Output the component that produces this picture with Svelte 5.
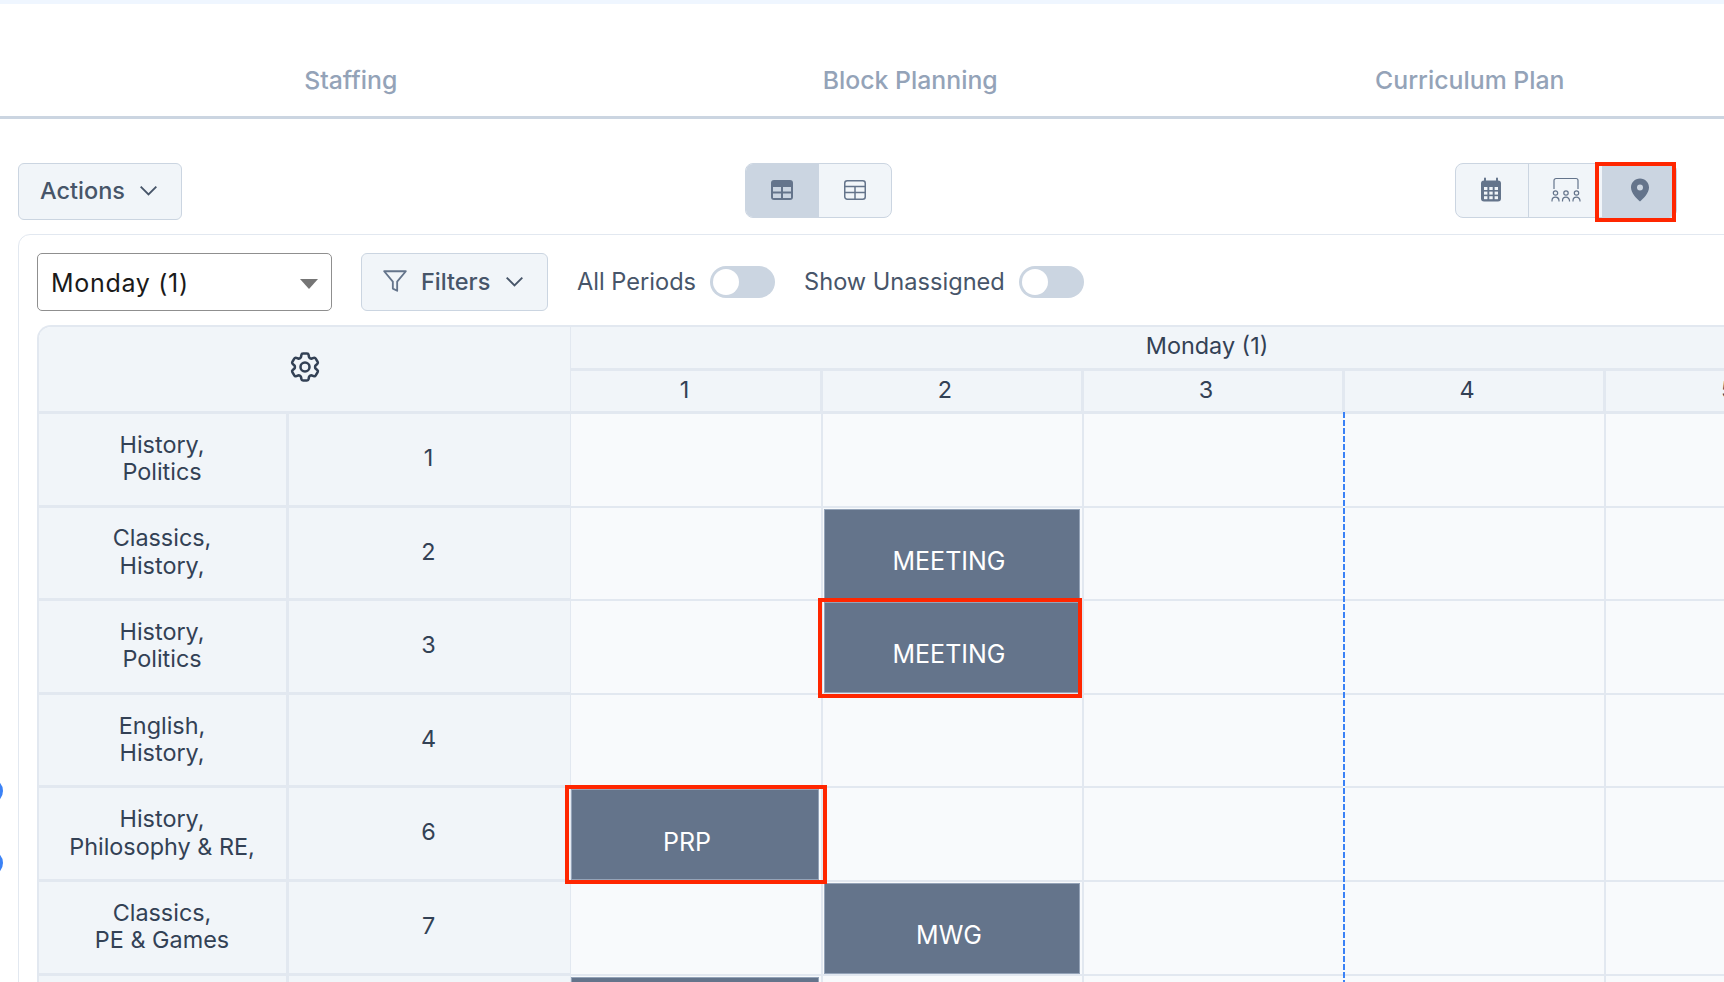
<script>
  const tabs = ["Staffing", "Block Planning", "Curriculum Plan"];
  const periods = [1, 2, 3, 4, 5];

  const rows = [
    { lines: ["History,", "Politics"], num: "1", blocks: {} },
    { lines: ["Classics,", "History,"], num: "2", blocks: { 2: "MEETING" } },
    { lines: ["History,", "Politics"], num: "3", blocks: { 2: "MEETING" } },
    { lines: ["English,", "History,"], num: "4", blocks: {} },
    { lines: ["History,", "Philosophy & RE,"], num: "6", blocks: { 1: "PRP" } },
    { lines: ["Classics,", "PE & Games"], num: "7", blocks: { 2: "MWG" } },
    { lines: [], num: "", blocks: { 1: " " } },
  ];
</script>

<div class="page">
  <div class="strip"></div>

  <nav class="tabs">
    {#each tabs as tab}
      <div class="tab">{tab}</div>
    {/each}
  </nav>

  <div class="toolbar">
    <button class="btn actions">
      Actions
      <svg class="chev" viewBox="0 0 24 24"><path d="M19.500 8.250l-7.500 7.500-7.500-7.500" /></svg>
    </button>

    <div class="segment two">
      <div class="seg active">
        <svg width="24" height="24" viewBox="0 0 24 24">
          <rect x="1" y="2" width="22" height="20" rx="3" fill="#64748b" />
          <rect x="3" y="9" width="8" height="4.500" fill="#cbd5e1" />
          <rect x="13" y="9" width="8" height="4.500" fill="#cbd5e1" />
          <rect x="3" y="15.500" width="8" height="4.500" fill="#cbd5e1" />
          <rect x="13" y="15.500" width="8" height="4.500" fill="#cbd5e1" />
        </svg>
      </div>
      <div class="seg">
        <svg width="24" height="24" viewBox="0 0 24 24" fill="none" stroke="#64748b" stroke-width="1.500">
          <rect x="1.750" y="2.750" width="20.500" height="18.500" rx="2.500" />
          <path d="M2 8.500h20M2 14.500h20M12 8.500v12.500" />
        </svg>
      </div>
    </div>

    <div class="segment three">
      <div class="seg cal">
        <svg width="24" height="26" viewBox="0 0 24 26">
          <path d="M6 1.500v4M18 1.500v4" stroke="#64748b" stroke-width="2" stroke-linecap="round" />
          <rect x="2" y="3.500" width="20" height="21" rx="3" fill="#64748b" />
          <g fill="#f1f5f9">
            <rect x="5" y="10" width="3.400" height="3" />
            <rect x="10.300" y="10" width="3.400" height="3" />
            <rect x="15.600" y="10" width="3.400" height="3" />
            <rect x="5" y="14.600" width="3.400" height="3" />
            <rect x="10.300" y="14.600" width="3.400" height="3" />
            <rect x="15.600" y="14.600" width="3.400" height="3" />
            <rect x="5" y="19.200" width="3.400" height="3" />
            <rect x="10.300" y="19.200" width="3.400" height="3" />
            <rect x="15.600" y="19.200" width="3.400" height="3" />
          </g>
        </svg>
      </div>
      <div class="seg room">
        <svg width="30" height="26" viewBox="0 0 30 26" fill="none" stroke="#64748b" stroke-width="1.200">
          <path d="M3 12V3.500A2 2 0 0 1 5 1.500h20a2 2 0 0 1 2 2V12" />
          <circle cx="4.500" cy="16" r="2.200" />
          <circle cx="15" cy="16" r="2.200" />
          <circle cx="25.500" cy="16" r="2.200" />
          <path d="M1 24.500v-.800a3.500 3.500 0 0 1 7 0v.800M11.500 24.500v-.800a3.500 3.500 0 0 1 7 0v.800M22 24.500v-.800a3.500 3.500 0 0 1 7 0v.800" />
        </svg>
      </div>
      <div class="seg active">
        <svg width="20" height="24" viewBox="0 0 20 24">
          <path
            fill="#64748b"
            fill-rule="evenodd"
            d="M10 .500C4.800.500 1 4.500 1 9.500c0 5.500 5.500 11 9 14 3.500-3 9-8.500 9-14C19 4.500 15.200.500 10 .500zm0 12a3 3 0 1 1 0-6 3 3 0 0 1 0 6z"
          />
        </svg>
      </div>
    </div>
  </div>

  <section class="card">
    <div class="filters">
      <div class="select">
        <span>Monday (1)</span>
        <i class="caret"></i>
      </div>
      <button class="btn filter">
        <svg class="funnel" viewBox="0 0 24 24"><path d="M22 3H2l8 9.500V19l4 2v-8.500z" /></svg>
        Filters
        <svg class="chev" viewBox="0 0 24 24"><path d="M19.500 8.250l-7.500 7.500-7.500-7.500" /></svg>
      </button>
      <div class="switch-row">
        <span>All Periods</span>
        <i class="switch"></i>
      </div>
      <div class="switch-row">
        <span>Show Unassigned</span>
        <i class="switch"></i>
      </div>
    </div>

    <div class="table-wrap">
      <div class="table">
        <div class="corner">
          <svg class="gear" viewBox="0 0 24 24">
            <path d="M9.594 3.940c.090-.542.560-.940 1.110-.940h2.593c.550 0 1.020.398 1.110.940l.213 1.281c.063.374.313.686.645.870.074.040.147.083.220.127.324.196.720.257 1.075.124l1.217-.456a1.125 1.125 0 0 1 1.370.490l1.296 2.247a1.125 1.125 0 0 1-.260 1.431l-1.003.827c-.293.240-.438.613-.431.992a6.759 6.759 0 0 1 0 .255c-.007.378.138.750.430.990l1.005.828c.424.350.534.954.260 1.430l-1.298 2.247a1.125 1.125 0 0 1-1.369.491l-1.217-.456c-.355-.133-.750-.072-1.076.124a6.570 6.570 0 0 1-.220.128c-.331.183-.581.495-.644.869l-.213 1.280c-.090.543-.560.941-1.110.941h-2.594c-.550 0-1.020-.398-1.110-.940l-.213-1.281c-.062-.374-.312-.686-.644-.870a6.520 6.520 0 0 1-.220-.127c-.325-.196-.720-.257-1.076-.124l-1.217.456a1.125 1.125 0 0 1-1.369-.490l-1.297-2.247a1.125 1.125 0 0 1 .260-1.431l1.004-.827c.292-.240.437-.613.430-.992a6.932 6.932 0 0 1 0-.255c.007-.378-.138-.750-.430-.990l-1.004-.828a1.125 1.125 0 0 1-.260-1.430l1.297-2.247a1.125 1.125 0 0 1 1.370-.491l1.216.456c.356.133.751.072 1.076-.124.072-.044.146-.087.220-.128.332-.183.582-.495.644-.869l.214-1.281z" />
            <path d="M15 12a3 3 0 1 1-6 0 3 3 0 0 1 6 0z" />
          </svg>
        </div>
        <div class="day">Monday (1)</div>
        {#each periods as p}
          <div class="period" class:first={p === 1}>{p}</div>
        {/each}

        {#each rows as row}
          <div class="label">
            {#each row.lines as line}
              <div>{line}</div>
            {/each}
          </div>
          <div class="label num">{row.num}</div>
          {#each periods as p}
            <div class="cell">
              {#if row.blocks[p]}
                <div class="block" class:first={p === 1}>{row.blocks[p]}</div>
              {/if}
            </div>
          {/each}
        {/each}
      </div>
      <div class="now-line"></div>
    </div>
  </section>

  <!-- cut-off blue markers at the window edge -->
  <i class="dot dot-a"></i>
  <i class="dot dot-b"></i>

  <!-- red annotation boxes -->
  <i class="mark mark-pin"></i>
  <i class="mark mark-meeting"></i>
  <i class="mark mark-prp"></i>
</div>

<style>
  :global(body) {
    overflow: hidden;
    background: #fff;
  }

  .page {
    position: relative;
    width: 1724px;
    height: 982px;
    overflow: hidden;
    font-family: Inter, "Liberation Sans", sans-serif;
    color: #334155;
  }

  .strip {
    height: 4px;
    background: #eff6ff;
  }

  .tabs {
    display: flex;
    height: 115px;
    padding-left: 71px;
    border-bottom: 3px solid #cbd5e1;
    box-sizing: border-box;
  }

  .tab {
    flex: 0 0 559.500px;
    align-self: flex-end;
    padding-bottom: 21px;
    text-align: center;
    font-size: 24.800px;
    font-weight: 500;
    line-height: 30px;
    color: #94a3b8;
  }

  .toolbar {
    display: flex;
    justify-content: space-between;
    margin-top: 44px;
    padding: 0 47px 0 18px;
    height: 57px;
  }

  .btn {
    display: flex;
    align-items: center;
    box-sizing: border-box;
    border: 1px solid #cbd5e1;
    border-radius: 6px;
    background: #f1f5f9;
    color: #475569;
    font-family: inherit;
    font-size: 23.500px;
    font-weight: 500;
    padding: 0 0 2px;
  }

  .actions {
    width: 164px;
    height: 57px;
    padding-left: 21px;
    gap: 11px;
  }

  .chev {
    width: 25px;
    height: 25px;
    fill: none;
    stroke: #475569;
    stroke-width: 1.800;
  }

  .segment {
    display: flex;
    height: 55px;
    box-sizing: border-box;
    border: 1px solid #cbd5e1;
    border-radius: 8px;
    background: #f1f5f9;
    overflow: hidden;
  }

  .seg {
    display: flex;
    align-items: center;
    justify-content: center;
    padding-bottom: 2px;
  }

  .seg.active {
    background: #cbd5e1;
  }

  .two {
    width: 147px;
  }

  .two .seg {
    width: 73px;
  }

  .three {
    width: 222px;
  }

  .three .seg {
    width: 73px;
    border-right: 1px solid #cbd5e1;
  }

  .three .cal {
    padding-right: 2px;
    box-sizing: border-box;
  }

  .three .seg:last-child {
    border-right: 0;
    flex: 1;
  }

  .card {
    width: max-content;
    margin: 14px 0 0 18px;
    padding: 18px 0 0 18px;
    border: 1px solid #e2e8f0;
    border-radius: 12px 0 0 0;
  }

  .filters {
    display: flex;
    align-items: center;
    gap: 29px;
    height: 58px;
  }

  .select {
    display: flex;
    align-items: center;
    justify-content: space-between;
    box-sizing: border-box;
    width: 295px;
    height: 58px;
    padding: 1px 13px 0 13px;
    border: 1px solid #8f8f8f;
    border-radius: 5px;
    background: #fff;
    color: #1a1a1a;
    font-size: 25px;
    letter-spacing: 0.700px;
  }

  .caret {
    width: 0;
    height: 0;
    border-left: 9px solid transparent;
    border-right: 9px solid transparent;
    border-top: 10px solid #757575;
    margin-top: 2px;
  }

  .filter {
    width: 187px;
    height: 58px;
    padding-left: 20px;
  }

  .funnel {
    width: 26px;
    height: 26px;
    margin-right: 13px;
    fill: none;
    stroke: #64748b;
    stroke-width: 1.700;
    stroke-linejoin: round;
  }

  .filter .chev {
    margin-left: 12px;
  }

  .switch-row {
    display: flex;
    align-items: center;
    gap: 14px;
    font-size: 23.600px;
    color: #475569;
  }

  .switch-row span {
    margin-top: -2px;
  }

  .switch {
    position: relative;
    width: 65px;
    height: 32px;
    border-radius: 16px;
    background: #cbd5e1;
  }

  .switch::after {
    content: "";
    position: absolute;
    left: 3px;
    top: 3px;
    width: 26px;
    height: 26px;
    border-radius: 50%;
    background: #fff;
  }

  .table-wrap {
    position: relative;
    margin-top: 14px;
  }

  .table {
    display: grid;
    grid-template-columns: 250px 282px 252px 261px 261px 261px 261px;
    grid-template-rows: 44px 43px repeat(7, 93.600px);
    border-top: 2px solid #e2e8f0;
    border-left: 2px solid #e2e8f0;
    border-radius: 14px 0 0 0;
    font-size: 23.400px;
    color: #334155;
    box-sizing: border-box;
  }

  .corner {
    grid-column: span 2;
    grid-row: span 2;
    display: flex;
    align-items: center;
    justify-content: center;
    padding-bottom: 4px;
    background: #f1f5f9;
    border-bottom: 3px solid #e2e8f0;
    border-top-left-radius: 12px;
    border-right: 1px solid #e2e8f0;
  }

  .gear {
    width: 36px;
    height: 36px;
    fill: none;
    stroke: #334155;
    stroke-width: 1.700;
    stroke-linejoin: round;
  }

  .day,
  .period {
    display: flex;
    align-items: center;
    justify-content: center;
    padding: 0 14px 4px 0;
    background: #f1f5f9;
    border-bottom: 3px solid #e2e8f0;
  }

  .day {
    grid-column: span 5;
    padding-right: 24px;
  }

  .period {
    border-right: 3px solid #e2e8f0;
  }

  .period.first {
    padding-right: 22px;
  }

  .label {
    display: flex;
    flex-direction: column;
    align-items: center;
    justify-content: center;
    text-align: center;
    line-height: 27.500px;
    padding: 0 1px 2px 0;
    background: #f1f5f9;
    border-right: 3px solid #e2e8f0;
    border-bottom: 3px solid #e2e8f0;
  }

  .num {
    border-right: 1px solid #e2e8f0;
    padding: 0 2px 3px 0;
  }

  .cell {
    display: flex;
    background: #f8fafc;
    border-right: 2px solid #e2e8f0;
    border-bottom: 2px solid #e2e8f0;
  }

  .block {
    flex: 1;
    display: flex;
    align-items: center;
    justify-content: center;
    margin: 1px 2px 0 1px;
    padding: 14px 6px 0 0;
    background: #64748b;
    border: 1px solid #94a3b8;
    color: #fff;
    font-size: 25px;
  }

  .block.first {
    margin-left: 0;
    padding-right: 16px;
  }

  .now-line {
    position: absolute;
    left: 1306px;
    top: 87px;
    bottom: 0;
    width: 2px;
    background: repeating-linear-gradient(#3b82f6 0 6px, #f8fafc 6px 8px);
  }

  .dot {
    position: absolute;
    left: -23px;
    width: 26px;
    height: 26px;
    border-radius: 50%;
    background: #3b82f6;
  }

  .dot-a {
    top: 778px;
  }

  .dot-b {
    top: 850px;
  }

  .mark {
    position: absolute;
    box-sizing: border-box;
    border: 4px solid #ff2600;
  }

  .mark-pin {
    left: 1595px;
    top: 162px;
    width: 81px;
    height: 60px;
  }

  .mark-meeting {
    left: 818px;
    top: 598px;
    width: 264px;
    height: 100px;
  }

  .mark-prp {
    left: 565px;
    top: 785px;
    width: 262px;
    height: 99px;
  }
</style>
